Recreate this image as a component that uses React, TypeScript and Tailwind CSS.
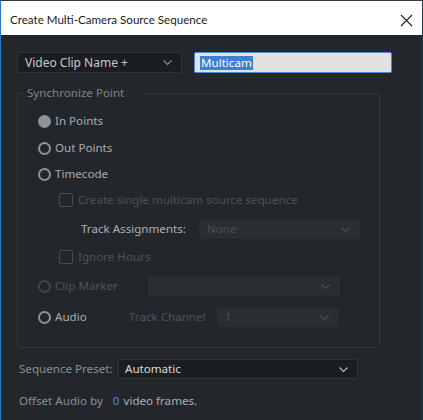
import React from "react";

const font = { fontFamily: '"Noto Sans", "Open Sans", sans-serif' };

const Chevron = ({ color = "#8b9196" }: { color?: string }) => (
  <svg width="9" height="5" viewBox="0 0 9 5" fill="none">
    <path d="M0.5 0.5l4 4 4-4" stroke={color} strokeWidth="1.1" />
  </svg>
);

const Radio = ({
  label,
  checked,
  disabled,
}: {
  label: string;
  checked?: boolean;
  disabled?: boolean;
}) => (
  <div className="flex items-center gap-[4px]">
    <span
      className={
        checked
          ? "w-[13px] h-[13px] rounded-full bg-[#8d9398]"
          : disabled
            ? "w-[13px] h-[13px] rounded-full border-2 border-[#41464b]"
            : "w-[13px] h-[13px] rounded-full border-2 border-[#8d9398]"
      }
    />
    <span className={disabled ? "text-[#4f555a]" : "text-[#a7adb2]"}>
      {label}
    </span>
  </div>
);

const Checkbox = ({ label }: { label: string }) => (
  <div className="flex items-center gap-[5px] pl-[21px]">
    <span className="w-[14px] h-[14px] rounded-[2px] border border-[#474d52]" />
    <span className="text-[#4d5358]">{label}</span>
  </div>
);

const DisabledSelect = ({
  value,
  className,
}: {
  value: string;
  className: string;
}) => (
  <div
    className={`flex items-center justify-between h-[20px] rounded-[2px] bg-[#2a2e32] pl-[8px] pr-[10px] text-[#4b5156] ${className}`}
  >
    <span>{value}</span>
    <Chevron color="#4b5156" />
  </div>
);

export default function App() {
  return (
    <div
      className="w-[423px] h-[420px] flex flex-col bg-[#23272b] border-l border-[#2b78c8] border-t border-t-[#3a3a3a] border-r border-r-[#1f3a48] text-[11.6px] leading-[16px]"
      style={font}
    >
      <div className="h-[34px] shrink-0 bg-white flex items-center justify-between pl-[9px] pr-[9px] pt-[4px]">
        <span
          className="text-[#1a1a1a] text-[11.6px]"
          style={{ fontFamily: 'Lato, "Noto Sans", sans-serif' }}
        >
          Create Multi-Camera Source Sequence
        </span>
        <svg width="13" height="13" viewBox="0 0 13 13" fill="none">
          <path d="M1 1l11 11M12 1L1 12" stroke="#222" strokeWidth="1.1" />
        </svg>
      </div>

      <div className="flex flex-col pl-[16px] pt-[17px]">
        <div className="flex items-center h-[21px]">
          <div className="w-[165px] h-[21px] flex items-center justify-between rounded-[2px] bg-[#1b1e21] border border-[#30353a] pl-[7px] pr-[9px] text-[#c3c9ce] text-[12px]">
            <span>Video Clip Name +</span>
            <Chevron />
          </div>
          <div className="ml-[12px] w-[198px] h-[21px] flex items-center bg-[#e2e2e2] border border-[#4d8ad0] rounded-[2px] pl-[5px]">
            <span className="bg-[#3a82d4] text-white px-[1px] leading-[14px]">
              Multicam
            </span>
          </div>
        </div>

        <fieldset className="mt-[12px] w-[363px] h-[263px] border border-[#33383d] rounded-[3px] pl-[20px]">
          <legend className="-ml-[15px] pl-[4px] pr-[18px] text-[#7f858b]">
            Synchronize Point
          </legend>
          <div className="flex flex-col">
            <div className="mt-[10px] h-[20px] flex items-center">
              <Radio label="In Points" checked />
            </div>
            <div className="mt-[7px] h-[20px] flex items-center">
              <Radio label="Out Points" />
            </div>
            <div className="mt-[6px] h-[20px] flex items-center">
              <Radio label="Timecode" />
            </div>
            <div className="mt-[6px] h-[20px] flex items-center">
              <Checkbox label="Create single multicam source sequence" />
            </div>
            <div className="mt-[9px] h-[20px] flex items-center">
              <span className="ml-[43px] w-[118px] text-[#abb1b6]">
                Track Assignments:
              </span>
              <DisabledSelect value="None" className="w-[161px]" />
            </div>
            <div className="mt-[8px] h-[20px] flex items-center">
              <Checkbox label="Ignore Hours" />
            </div>
            <div className="mt-[9px] h-[20px] flex items-center">
              <div className="w-[110px]">
                <Radio label="Clip Marker" disabled />
              </div>
              <DisabledSelect value="" className="w-[192px]" />
            </div>
            <div className="mt-[11px] h-[20px] flex items-center">
              <div className="w-[91px]">
                <Radio label="Audio" />
              </div>
              <span className="w-[88px] text-[#4f555a]">Track Channel</span>
              <DisabledSelect value="1" className="w-[122px]" />
            </div>
          </div>
        </fieldset>

        <div className="mt-[11px] h-[20px] flex items-center">
          <span className="w-[101px] pl-[2px] text-[#8b9196]">
            Sequence Preset:
          </span>
          <div className="w-[240px] h-[20px] flex items-center justify-between rounded-[2px] bg-[#1b1e21] border border-[#30353a] pl-[6px] pr-[9px] text-[#d6dadd]">
            <span>Automatic</span>
            <Chevron color="#b4babf" />
          </div>
        </div>

        <div className="mt-[12px] h-[20px] flex items-center pl-[2px]">
          <span className="text-[#8b9196]">Offset Audio by</span>
          <span className="ml-[10px] text-[#3d8fe6]">0</span>
          <span className="ml-[4px] text-[#a9afb4]">video frames.</span>
        </div>
      </div>
    </div>
  );
}
